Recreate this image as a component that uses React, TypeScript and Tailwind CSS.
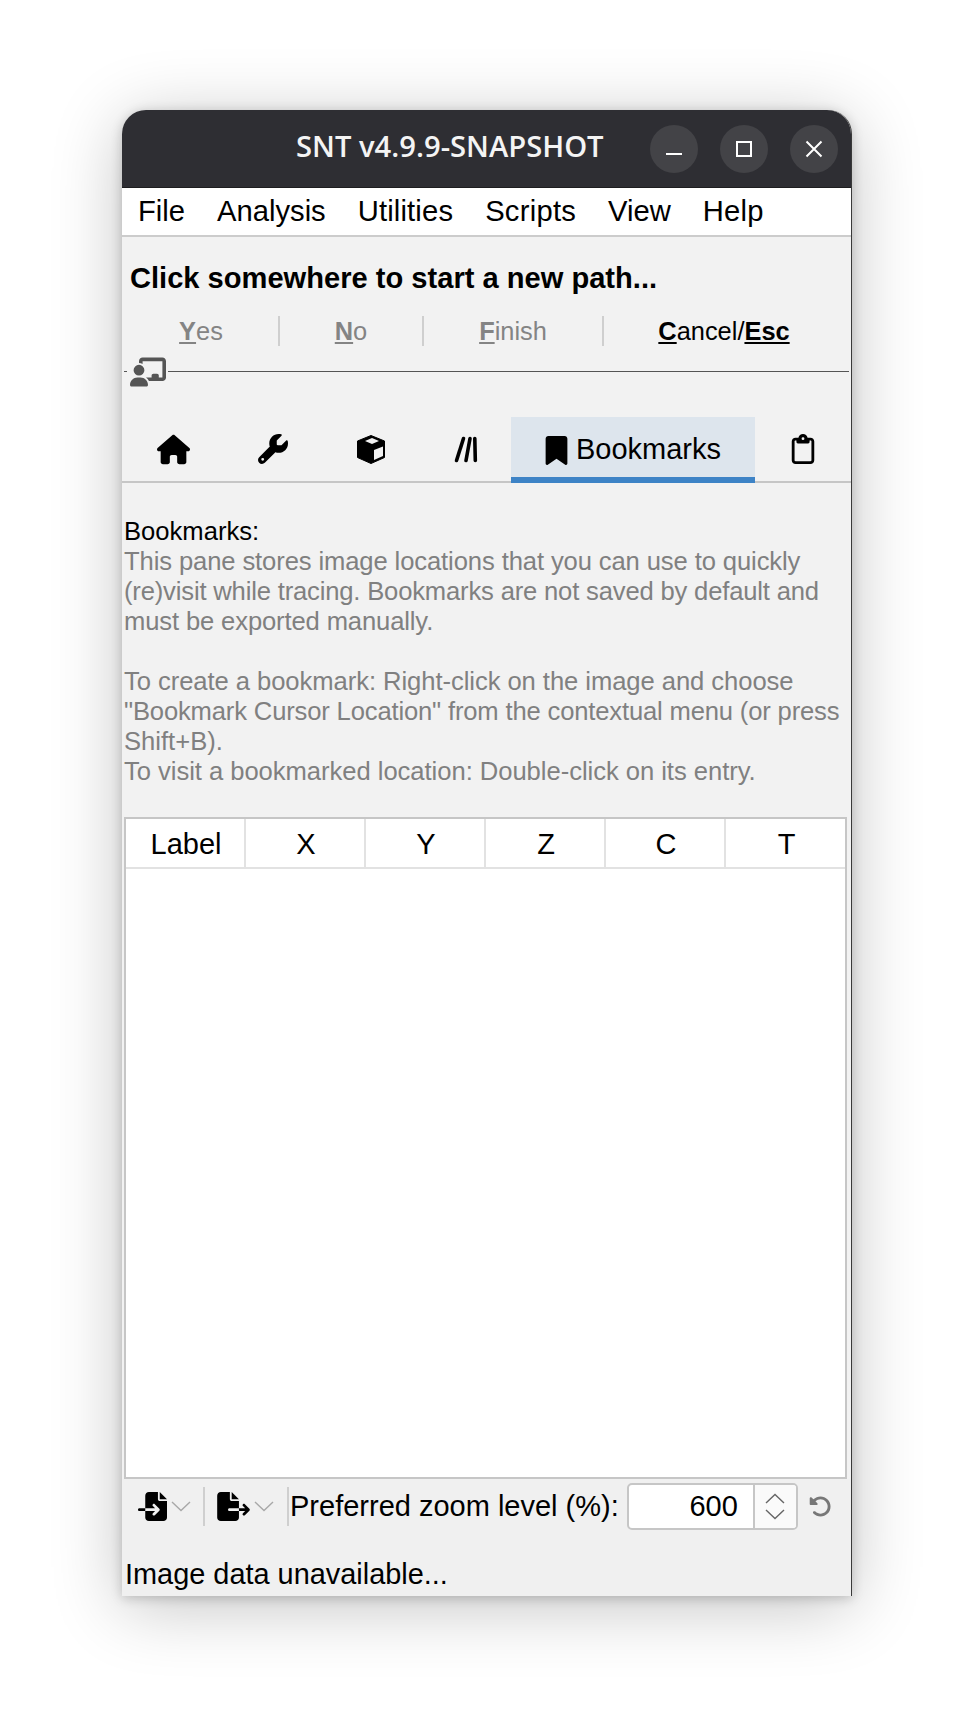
import {
  FaBookmark,
  FaChalkboardUser,
  FaFileExport,
  FaFileImport,
  FaHouse,
  FaRegClipboard,
  FaRotateLeft,
  FaWrench,
} from "react-icons/fa6";

const menus = [
  { label: "File", className: "" },
  { label: "Analysis", className: "" },
  { label: "Utilities", className: "tracking-[0.15px]" },
  { label: "Scripts", className: "tracking-[0.25px]" },
  { label: "View", className: "" },
  { label: "Help", className: "tracking-[0.2px]" },
];
const columns = ["Label", "X", "Y", "Z", "C", "T"];

function WindowButton({ children }: { children: React.ReactNode }) {
  return (
    <div className="flex h-12 w-12 items-center justify-center rounded-full bg-[#434347]">
      <svg width="24" height="24" viewBox="0 0 24 24" fill="none" stroke="white" strokeWidth="2">
        {children}
      </svg>
    </div>
  );
}

function Divider() {
  return <div className="h-[30px] w-[2px] bg-[#cfcfcf]" />;
}

function IconTab({ width, children }: { width: string; children: React.ReactNode }) {
  return <div className={`flex items-center justify-center ${width}`}>{children}</div>;
}

function Chevron({ up, className }: { up?: boolean; className?: string }) {
  return (
    <svg width="20" height="11" viewBox="0 0 20 11" fill="none" stroke="currentColor" strokeWidth="1.4" className={className}>
      <polyline points={up ? "1,10 10,1.5 19,10" : "1,1 10,9.5 19,1"} />
    </svg>
  );
}

function CubeIcon() {
  return (
    <svg width="28" height="29" viewBox="0 0 28 29">
      <path d="M14 0.5 L27.5 6 V22.5 L14 28.5 L0.5 22.5 V6 Z" fill="black" stroke="black" strokeLinejoin="round" />
      <path d="M15 3 L22 6 L15 9 L8 6 Z" fill="#f2f2f2" />
      <path d="M26 11.5 V21 L17 25 V15 Z" fill="#f2f2f2" />
    </svg>
  );
}

function LinesIcon() {
  return (
    <svg width="24" height="27" viewBox="0 0 24 27" fill="none" stroke="black" strokeWidth="3.6" strokeLinecap="round">
      <path d="M2.5 24.5 L9.5 2.5" />
      <path d="M12 24.5 L16 2.5" />
      <path d="M20.8 2.5 L21.3 24.5" />
    </svg>
  );
}

export default function App() {
  return (
    <div className="h-[1730px] w-[973px] bg-white pt-[110px] pl-[122px] font-['Liberation_Sans',sans-serif] text-black">
      <div className="flex h-[1486px] w-[730px] flex-col rounded-t-[24px] border-r border-r-[#3a3a3a] bg-[#f2f2f2] shadow-[0_2px_12px_rgba(0,0,0,0.2),0_10px_70px_rgba(0,0,0,0.24)]">
        {/* Title bar */}
        <div className="relative flex h-[78px] shrink-0 items-center justify-end gap-[22px] rounded-t-[24px] border-b border-b-[#1d1d1f] bg-[#2e2e33] pr-[13px]">
          <div className="absolute top-[18px] left-[174px] font-['Open_Sans',sans-serif] text-[29.2px] leading-[36px] font-semibold text-[#f4f4f4]">
            SNT v4.9.9-SNAPSHOT
          </div>
          <WindowButton>
            <path d="M4 17 H20" />
          </WindowButton>
          <WindowButton>
            <rect x="5" y="5" width="14" height="14" />
          </WindowButton>
          <WindowButton>
            <path d="M4.5 4.5 L19.5 19.5 M19.5 4.5 L4.5 19.5" />
          </WindowButton>
        </div>

        {/* Menu bar */}
        <div className="flex h-[49px] shrink-0 items-center gap-[32px] border-b-2 border-b-[#cccccc] bg-white pl-4 text-[29.2px]">
          {menus.map((menu) => (
            <span key={menu.label} className={menu.className}>
              {menu.label}
            </span>
          ))}
        </div>

        <div className="mt-[24px] pl-2 text-[29.1px] leading-[34px] font-bold">
          Click somewhere to start a new path...
        </div>

        {/* Tracing prompt */}
        <div className="relative mt-[21px] flex h-[30px] items-center text-[25.4px] text-[#848484]">
          <div className="flex w-[156px] justify-center pl-[2px]">
            <span>
              <span className="font-bold underline">Y</span>es
            </span>
          </div>
          <Divider />
          <div className="flex w-[142px] justify-center">
            <span>
              <span className="font-bold underline">N</span>o
            </span>
          </div>
          <Divider />
          <div className="flex w-[178px] justify-center">
            <span>
              <span className="font-bold underline">F</span>inish
            </span>
          </div>
          <Divider />
          <div className="flex w-[240px] justify-center text-black">
            <span>
              <span className="font-bold underline">C</span>ancel/
              <span className="font-bold underline">Esc</span>
            </span>
          </div>
        </div>

        <div className="mt-[25px] ml-[2px] flex h-px w-[725px] items-center bg-[#555555]">
          <div className="ml-[3px] flex h-[40px] w-[41px] items-center justify-center bg-[#f2f2f2] text-[#555555]">
            <FaChalkboardUser size={36} />
          </div>
        </div>

        {/* Tabs */}
        <div className="mt-[45px] flex h-[66px] shrink-0 items-stretch border-b-2 border-b-[#c6c6c6] text-[29px]">
          <IconTab width="w-[102px]">
            <FaHouse size={33} />
          </IconTab>
          <IconTab width="w-[98px]">
            <FaWrench size={30} />
          </IconTab>
          <IconTab width="w-[98px]">
            <CubeIcon />
          </IconTab>
          <IconTab width="w-[91px]">
            <LinesIcon />
          </IconTab>
          <div className="-mb-[2px] flex w-[244px] items-center justify-center gap-[5px] border-b-[6px] border-b-[#3d83c6] bg-[#dde5ed] pt-[6px] pr-[3px]">
            <FaBookmark size={29} />
            <span>Bookmarks</span>
          </div>
          <IconTab width="w-[96px]">
            <FaRegClipboard size={30} />
          </IconTab>
        </div>

        {/* Help text */}
        <div className="mt-[33px] pl-[2px] text-[25.6px] leading-[30px] text-[#808080]">
          <div className="text-black">Bookmarks:</div>
          <div className="tracking-[-0.11px]">This pane stores image locations that you can use to quickly</div>
          <div className="tracking-[-0.17px]">(re)visit while tracing. Bookmarks are not saved by default and</div>
          <div className="tracking-[-0.13px]">must be exported manually.</div>
          <div className="h-[30px]" />
          <div className="tracking-[-0.06px]">To create a bookmark: Right-click on the image and choose</div>
          <div className="tracking-[-0.16px]">"Bookmark Cursor Location" from the contextual menu (or press</div>
          <div>Shift+B).</div>
          <div className="tracking-[-0.04px]">To visit a bookmarked location: Double-click on its entry.</div>
        </div>

        {/* Table */}
        <div className="mt-[31px] ml-[2px] flex h-[662px] w-[723px] shrink-0 flex-col border-2 border-[#c6c6c6] bg-white">
          <div className="grid h-[50px] shrink-0 grid-cols-[repeat(5,120px)_1fr] border-b-2 border-b-[#e2e2e2] text-[29px]">
            {columns.map((col) => (
              <div
                key={col}
                className="flex items-center justify-center border-r-2 border-r-[#e2e2e2] pt-[4px] pl-[2px] last:border-r-0"
              >
                {col}
              </div>
            ))}
          </div>
        </div>

        {/* Bottom toolbar */}
        <div className="flex flex-1 flex-col bg-[#f0f0f0]">
          <div className="mt-[4px] flex h-[47px] shrink-0 items-center pl-[16px] text-[29px]">
            <FaFileImport size={29} className="w-[29px]" />
            <Chevron className="ml-[4px] text-[#a8a8a8]" />
            <div className="ml-[12px] h-[39px] w-[2px] bg-[#cfcfcf]" />
            <FaFileExport size={29} className="ml-[12px] w-[33px]" />
            <Chevron className="ml-[4px] text-[#a8a8a8]" />
            <div className="ml-[13px] h-[39px] w-[2px] bg-[#cfcfcf]" />
            <span className="ml-[1px] whitespace-nowrap">Preferred zoom level (%):</span>
            <div className="ml-[8px] flex h-[47px] w-[171px] overflow-hidden rounded-[5px] border-2 border-[#c6c6c6] bg-white">
              <div className="flex flex-1 items-center justify-end pr-[15px]">600</div>
              <div className="flex w-[43px] flex-col items-center justify-center gap-[5px] border-l-2 border-l-[#c6c6c6] bg-[#fafafa] text-[#666666]">
                <Chevron up />
                <Chevron />
              </div>
            </div>
            <FaRotateLeft size={23} className="ml-[11px] text-[#777777]" />
          </div>

          <div className="mt-auto flex h-[46px] items-center pt-[4px] pl-[3px] text-[28.9px]">
            Image data unavailable...
          </div>
        </div>
      </div>
    </div>
  );
}
